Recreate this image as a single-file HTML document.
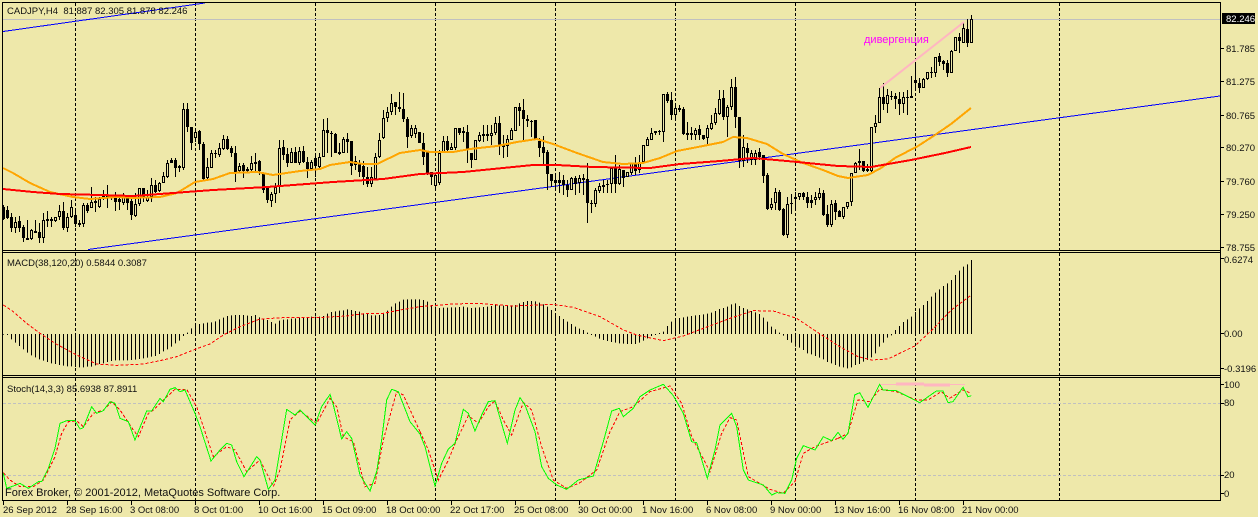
<!DOCTYPE html>
<html><head><meta charset="utf-8"><title>CADJPY,H4</title>
<style>
html,body{margin:0;padding:0;background:#EEE8AA;width:1258px;height:517px;overflow:hidden}
svg{display:block}
text{font-family:"Liberation Sans",sans-serif;font-size:9.5px;fill:#111}
.c{shape-rendering:crispEdges;fill:none}
</style></head><body>
<svg width="1258" height="517" viewBox="0 0 1258 517" xmlns="http://www.w3.org/2000/svg">
<rect width="1258" height="517" fill="#EEE8AA"/>
<g class="c" stroke="#000" stroke-dasharray="3 2">
<path d="M75.5 3V500M195.5 3V500M315.5 3V500M435.5 3V500M555.5 3V500M675.5 3V500M795.5 3V500M915.5 3V500M1059.5 3V500"/>
</g>
<path class="c" stroke="#c0c0c0" d="M3 19.5H1220"/>
<g class="c" stroke="#c0c0c0" stroke-dasharray="3 2"><path d="M3 403.5H1220M3 475.5H1220"/></g>
<g fill="none" stroke="#0000ff" shape-rendering="crispEdges">
<path d="M3 31.5L205 3"/>
<path d="M88 249.5L1220 96"/>
</g>
<!-- candle wicks -->
<path class="c" stroke="#000" d="M3.5 205V220M7.5 206V219M11.5 213V232M15.5 217V233M19.5 216V232M23.5 225V242M27.5 220V240M31.5 229V240M35.5 220V232M39.5 223V243M43.5 213V243M47.5 211V227M51.5 217V227M55.5 217V222M59.5 205V220M63.5 202V230M67.5 213V232M71.5 200V218M75.5 210V227M79.5 220V227M83.5 203V227M87.5 203V213M91.5 187V208M95.5 197V212M99.5 197V208M103.5 190V200M107.5 185V208M111.5 195V200M115.5 192V211M119.5 197V210M123.5 193V205M127.5 195V210M131.5 197V220M135.5 193V217M139.5 188V206M143.5 188V202M147.5 190V202M151.5 178V202M155.5 180V193M159.5 182V192M163.5 172V183M167.5 160V178M171.5 158V163M175.5 158V177M179.5 165V172M183.5 103V170M187.5 103V132M191.5 127V150M195.5 130V142M199.5 130V150M203.5 142V180M207.5 158V180M211.5 150V168M215.5 150V158M219.5 143V157M223.5 135V150M227.5 136V150M231.5 146V157M235.5 146V182M239.5 163V173M243.5 163V178M247.5 167V173M251.5 156V173M255.5 153V173M259.5 160V175M263.5 173V193M267.5 187V203M271.5 192V207M275.5 183V203M279.5 140V193M283.5 140V160M287.5 148V167M291.5 148V163M295.5 147V163M299.5 147V165M303.5 146V163M307.5 157V178M311.5 160V170M315.5 155V177M319.5 153V170M323.5 119V157M327.5 118V153M331.5 131V157M335.5 133V153M339.5 143V155M343.5 137V153M347.5 133V153M351.5 141V175M355.5 156V170M359.5 160V177M363.5 161V185M367.5 167V187M371.5 167V187M375.5 153V180M379.5 133V158M383.5 110V139M387.5 107V122M391.5 94V115M395.5 102V115M399.5 92V112M403.5 93V122M407.5 117V148M411.5 125V138M415.5 125V138M419.5 132V143M423.5 133V165M427.5 152V175M431.5 172V185M435.5 175V190M439.5 150V185M443.5 136V153M447.5 136V153M451.5 143V150M455.5 128V150M459.5 128V135M463.5 127V142M467.5 125V163M471.5 153V168M475.5 140V160M479.5 132V142M483.5 125V142M487.5 125V141M491.5 125V145M495.5 117V135M499.5 116V155M503.5 135V158M507.5 135V157M511.5 128V140M515.5 107V131M519.5 103V126M523.5 99V141M527.5 115V127M531.5 120V137M535.5 120V139M539.5 138V157M543.5 136V165M547.5 150V190M551.5 174V187M555.5 176V190M559.5 172V193M563.5 175V195M567.5 180V197M571.5 177V190M575.5 176V195M579.5 175V193M583.5 174V195M587.5 163V223M591.5 200V213M595.5 188V207M599.5 183V193M603.5 180V193M607.5 180V193M611.5 168V193M615.5 155V193M619.5 165V185M623.5 170V187M627.5 172V177M631.5 163V175M635.5 157V175M639.5 155V173M643.5 145V162M647.5 137V146M651.5 128V140M655.5 131V135M659.5 130V135M663.5 94V142M667.5 92V103M671.5 92V120M675.5 105V120M679.5 105V112M683.5 107V135M687.5 122V140M691.5 127V140M695.5 128V140M699.5 125V140M703.5 135V140M707.5 125V144M711.5 115V130M715.5 108V125M719.5 90V115M723.5 90V120M727.5 105V137M731.5 79V110M735.5 77V128M739.5 117V168M743.5 135V167M747.5 143V163M751.5 150V165M755.5 150V165M759.5 148V160M763.5 155V183M767.5 173V210M771.5 198V210M775.5 188V210M779.5 190V211M783.5 208V236M787.5 197V238M791.5 194V214M795.5 192V210M799.5 193V200M803.5 192V200M807.5 192V208M811.5 195V208M815.5 192V205M819.5 188V200M823.5 190V216M827.5 205V227M831.5 200V227M835.5 200V220M839.5 210V217M843.5 207V219M847.5 202V209M851.5 173V206M855.5 162V173M859.5 149V170M863.5 161V172M867.5 164V172M871.5 127V172M875.5 115V133M879.5 88V123M883.5 83V110M887.5 89V113M891.5 91V100M895.5 93V109M899.5 92V115M903.5 92V113M907.5 90V115M911.5 76V97M915.5 62V90M919.5 78V93M923.5 78V88M927.5 72V80M931.5 67V78M935.5 57V77M939.5 53V66M943.5 60V70M947.5 60V77M951.5 50V73M955.5 37V51M959.5 33V53M963.5 22V43M967.5 19V47M971.5 15V43"/>
<!-- candle bodies -->
<path class="c" stroke="#000" stroke-width="3" d="M3.5 207V219M7.5 210V218M11.5 217V228M15.5 222V228M19.5 221V228M23.5 227V238M27.5 238V240M31.5 230V239M35.5 231V233M39.5 232V238M43.5 220V238M47.5 219V221M51.5 219V221M55.5 217V221M59.5 211V217M63.5 211V228M67.5 217V228M71.5 207V217M75.5 215V224M79.5 223V225M83.5 205V224M87.5 205V211M91.5 202V208M95.5 201V203M99.5 199V207M103.5 195V197M107.5 195V197M111.5 197V198M115.5 197V202M119.5 199V202M123.5 197V203M127.5 197V203M131.5 201V215M135.5 204V216M139.5 188V204M143.5 188V197M147.5 197V201M151.5 185V197M155.5 185V192M159.5 183V191M163.5 176V183M167.5 163V177M171.5 160V163M175.5 160V168M179.5 166V168M183.5 109V168M187.5 109V127M191.5 127V143M195.5 132V138M199.5 131V144M203.5 144V179M207.5 167V178M211.5 153V168M215.5 153V154M219.5 148V155M223.5 139V149M227.5 139V149M231.5 148V153M235.5 153V172M239.5 166V171M243.5 165V171M247.5 169V171M251.5 163V170M255.5 162V164M259.5 161V171M263.5 174V190M267.5 188V200M271.5 194V201M275.5 187V194M279.5 148V186M283.5 147V155M287.5 154V163M291.5 152V163M295.5 152V163M299.5 151V163M303.5 151V162M307.5 162V169M311.5 162V169M315.5 158V166M319.5 157V167M323.5 130V157M327.5 130V133M331.5 133V134M335.5 134V153M339.5 152V154M343.5 139V153M347.5 139V142M351.5 141V166M355.5 161V165M359.5 163V172M363.5 166V177M367.5 177V184M371.5 177V184M375.5 157V179M379.5 140V157M383.5 118V138M387.5 112V118M391.5 103V112M395.5 102V107M399.5 107V109M403.5 109V119M407.5 119V137M411.5 128V136M415.5 128V134M419.5 132V143M423.5 143V157M427.5 152V173M431.5 172V177M435.5 175V186M439.5 153V183M443.5 141V152M447.5 141V150M451.5 147V150M455.5 128V148M459.5 128V133M463.5 131V133M467.5 132V150M471.5 153V160M475.5 140V160M479.5 135V141M483.5 134V136M487.5 134V136M491.5 133V136M495.5 123V133M499.5 123V146M503.5 145V147M507.5 139V146M511.5 130V140M515.5 107V131M519.5 107V111M523.5 110V119M527.5 119V121M531.5 121V122M535.5 120V139M539.5 141V148M543.5 147V153M547.5 152V174M551.5 174V181M555.5 180V183M559.5 180V183M563.5 180V185M567.5 185V190M571.5 178V190M575.5 178V184M579.5 178V183M583.5 178V180M587.5 179V203M591.5 203V204M595.5 190V204M599.5 186V191M603.5 185V187M607.5 184V185M611.5 168V184M615.5 168V184M619.5 169V184M623.5 170V178M627.5 172V177M631.5 163V173M635.5 164V171M639.5 162V170M643.5 145V162M647.5 139V146M651.5 133V140M655.5 131V133M659.5 131V132M663.5 94V132M667.5 94V101M671.5 100V115M675.5 108V115M679.5 108V110M683.5 109V134M687.5 133V135M691.5 133V135M695.5 130V135M699.5 129V135M703.5 135V139M707.5 128V138M711.5 123V129M715.5 113V123M719.5 99V114M723.5 98V117M727.5 107V117M731.5 87V107M735.5 87V117M739.5 117V161M743.5 147V161M747.5 148V153M751.5 153V160M755.5 153V160M759.5 152V157M763.5 155V176M767.5 175V209M771.5 204V208M775.5 192V203M779.5 192V210M783.5 209V235M787.5 204V235M791.5 203V204M795.5 197V199M799.5 193V197M803.5 193V197M807.5 197V203M811.5 200V203M815.5 197V200M819.5 193V198M823.5 193V215M827.5 214V225M831.5 204V225M835.5 203V212M839.5 211V217M843.5 207V217M847.5 202V207M851.5 173V202M855.5 163V173M859.5 161V163M863.5 161V171M867.5 169V171M871.5 127V171M875.5 123V127M879.5 97V123M883.5 97V104M887.5 95V104M891.5 96V97M895.5 96V99M899.5 99V104M903.5 97V104M907.5 97V98M911.5 96V98M915.5 80V83M919.5 83V88M923.5 79V88M927.5 72V79M931.5 72V73M935.5 57V73M939.5 56V62M943.5 61V64M947.5 63V73M951.5 51V73M955.5 37V51M959.5 37V41M963.5 28V43M967.5 29V43M971.5 19V43"/>
<!-- white interiors -->
<path class="c" stroke="#EEE8AA" d="M15.5 223V227M31.5 231V238M43.5 221V237M55.5 218V220M59.5 212V216M67.5 218V227M71.5 208V216M83.5 206V223M91.5 203V207M99.5 200V206M123.5 198V202M135.5 205V215M139.5 189V203M147.5 198V200M151.5 186V196M159.5 184V190M163.5 177V182M167.5 164V176M183.5 110V167M195.5 133V137M207.5 168V177M211.5 154V167M219.5 149V154M223.5 140V148M239.5 167V170M251.5 164V169M271.5 195V200M275.5 188V193M279.5 149V185M291.5 153V162M299.5 152V162M311.5 163V168M319.5 158V166M323.5 131V156M343.5 140V152M355.5 162V164M371.5 178V183M375.5 158V178M379.5 141V156M383.5 119V137M387.5 113V117M391.5 104V111M411.5 129V135M415.5 129V133M435.5 176V185M439.5 154V182M443.5 142V151M451.5 148V149M455.5 129V147M475.5 141V159M479.5 136V140M491.5 134V135M495.5 124V132M507.5 140V145M511.5 131V139M515.5 108V130M571.5 179V189M579.5 179V182M595.5 191V203M599.5 187V190M611.5 169V183M619.5 170V183M627.5 173V176M631.5 164V172M639.5 163V169M643.5 146V161M647.5 140V145M651.5 134V139M663.5 95V131M675.5 109V114M695.5 131V134M707.5 129V137M711.5 124V128M715.5 114V122M719.5 100V113M727.5 108V116M731.5 88V106M743.5 148V160M751.5 154V159M755.5 154V159M771.5 205V207M775.5 193V202M787.5 205V234M799.5 194V196M815.5 198V199M819.5 194V197M831.5 205V224M843.5 208V216M847.5 203V206M851.5 174V201M855.5 164V172M871.5 128V170M875.5 124V126M879.5 98V122M887.5 96V103M903.5 98V103M923.5 80V87M927.5 73V78M935.5 58V72M951.5 52V72M955.5 38V50M963.5 29V42M971.5 20V42"/>
<!-- moving averages -->
<g fill="none" stroke-width="2" shape-rendering="crispEdges">
<polyline stroke="#ffa500" points="3,168 13,173 30,183 50,192 73,197 90,199 117,197 133,198 160,197 177,193 195,182 213,179 230,173 257,172 273,175 300,171 320,169 330,165 350,162 363,164 377,164 400,153 420,150 430,152 453,152 470,149 497,146 517,142 537,139 553,144 577,153 603,162 623,164 643,163 660,158 677,151 703,146 723,142 733,137 747,138 767,144 783,154 803,163 823,170 838,176 848,178 868,175 881,168 895,158 918,146 935,135 951,124 971,108"/>
<polyline stroke="#ff0000" points="3,189 33,192 60,194 100,195 133,196 173,193 213,190 267,187 333,182 383,179 420,174 463,172 503,168 533,165 557,165 593,167 650,168 680,164 720,161 753,158 787,161 838,166 871,167 911,160 945,153 971,147"/>
</g>
<path fill="none" stroke="#ffb6c1" stroke-width="2" d="M880 88L964 22"/>
<text x="864" y="43" style="fill:#ff00ff;font-size:11px">дивергенция</text>
<!-- MACD histogram -->
<path class="c" stroke="#000" transform="translate(0,250) scale(1,.33333)" d="M3.5 252V254M7.5 252V255M11.5 252V268M15.5 252V278M19.5 252V288M23.5 252V298M27.5 252V308M31.5 252V316M35.5 252V322M39.5 252V328M43.5 252V332M47.5 252V336M51.5 252V340M55.5 252V342M59.5 252V345M63.5 252V347M67.5 252V349M71.5 252V349M75.5 252V351M79.5 252V352M83.5 252V352M87.5 252V350M91.5 252V350M95.5 252V346M99.5 252V342M103.5 252V340M107.5 252V336M111.5 252V333M115.5 252V331M119.5 252V331M123.5 252V331M127.5 252V331M131.5 252V330M135.5 252V329M139.5 252V327M143.5 252V325M147.5 252V323M151.5 252V320M155.5 252V318M159.5 252V312M163.5 252V304M167.5 252V298M171.5 252V290M175.5 252V280M179.5 252V272M183.5 252V258M187.5 252V248M191.5 252V235M195.5 252V224M199.5 252V222M203.5 252V220M207.5 252V218M211.5 252V217M215.5 252V214M219.5 252V208M223.5 252V203M227.5 252V198M231.5 252V196M235.5 252V195M239.5 252V195M243.5 252V195M247.5 252V197M251.5 252V198M255.5 252V195M259.5 252V202M263.5 252V207M267.5 252V210M271.5 252V216M275.5 252V221M279.5 252V212M283.5 252V209M287.5 252V208M291.5 252V206M295.5 252V205M299.5 252V203M303.5 252V202M307.5 252V201M311.5 252V200M315.5 252V200M319.5 252V200M323.5 252V198M327.5 252V191M331.5 252V186M335.5 252V184M339.5 252V182M343.5 252V181M347.5 252V178M351.5 252V180M355.5 252V183M359.5 252V185M363.5 252V190M367.5 252V192M371.5 252V196M375.5 252V196M379.5 252V195M383.5 252V190M387.5 252V182M391.5 252V170M395.5 252V160M399.5 252V155M403.5 252V149M407.5 252V148M411.5 252V148M415.5 252V148M419.5 252V148M423.5 252V150M427.5 252V155M431.5 252V165M435.5 252V170M439.5 252V174M443.5 252V173M447.5 252V173M451.5 252V172M455.5 252V172M459.5 252V171M463.5 252V170M467.5 252V172M471.5 252V174M475.5 252V173M479.5 252V172M483.5 252V171M487.5 252V170M491.5 252V168M495.5 252V165M499.5 252V166M503.5 252V167M507.5 252V167M511.5 252V166M515.5 252V165M519.5 252V160M523.5 252V156M527.5 252V153M531.5 252V153M535.5 252V154M539.5 252V158M543.5 252V163M547.5 252V170M551.5 252V180M555.5 252V190M559.5 252V198M563.5 252V207M567.5 252V215M571.5 252V222M575.5 252V230M579.5 252V236M583.5 252V240M587.5 252V248M591.5 252V255M595.5 252V260M599.5 252V266M603.5 252V270M607.5 252V273M611.5 252V276M615.5 252V278M619.5 252V280M623.5 252V281M627.5 252V282M631.5 252V282M635.5 252V282M639.5 252V278M643.5 252V272M647.5 252V265M651.5 252V258M655.5 252V255M659.5 252V249M663.5 252V245M667.5 252V228M671.5 252V215M675.5 252V208M679.5 252V204M683.5 252V202M687.5 252V200M691.5 252V198M695.5 252V196M699.5 252V195M703.5 252V193M707.5 252V191M711.5 252V188M715.5 252V183M719.5 252V177M723.5 252V174M727.5 252V170M731.5 252V163M735.5 252V160M739.5 252V168M743.5 252V174M747.5 252V178M751.5 252V183M755.5 252V187M759.5 252V192M763.5 252V203M767.5 252V215M771.5 252V230M775.5 252V238M779.5 252V248M783.5 252V257M787.5 252V270M791.5 252V278M795.5 252V290M799.5 252V293M803.5 252V300M807.5 252V310M811.5 252V313M815.5 252V318M819.5 252V323M823.5 252V328M827.5 252V336M831.5 252V340M835.5 252V345M839.5 252V350M843.5 252V352M847.5 252V355M851.5 252V352M855.5 252V345M859.5 252V342M863.5 252V335M867.5 252V330M871.5 252V322M875.5 252V310M879.5 252V290M883.5 252V278M887.5 252V263M891.5 252V256M895.5 252V240M899.5 252V228M903.5 252V216M907.5 252V208M911.5 252V200M915.5 252V186M919.5 252V175M923.5 252V165M927.5 252V153M931.5 252V140M935.5 252V128M939.5 252V118M943.5 252V108M947.5 252V100M951.5 252V90M955.5 252V75M959.5 252V62M963.5 252V50M967.5 252V43M971.5 252V30"/>
<!-- MACD signal -->
<g fill="none" stroke="#ff0000" stroke-width="3" stroke-dasharray="9 6" shape-rendering="crispEdges">
<polyline transform="translate(0,250) scale(.33333)" points="10,165 40,185 80,220 120,250 170,283 230,315 290,342 350,346 430,342 480,332 530,320 585,298 630,282 670,255 720,230 780,207 850,203 950,203 1040,198 1100,190 1150,190 1200,180 1260,170"/>
<polyline transform="translate(420,250) scale(.33333)" points="0,170 100,162 170,160 280,168 400,163 460,172 540,200 610,240 650,255 730,272 790,258 850,235 930,205 1000,182 1060,183 1130,205 1190,245 1254,287"/>
<polyline transform="translate(838,250) scale(.33333)" points="0,287 60,320 100,330 150,327 230,288 280,242 340,180 400,135"/>
</g>
<!-- stochastic signal -->
<g fill="none" stroke="#ff0000" stroke-width="3" stroke-dasharray="9 6" shape-rendering="crispEdges">
<polyline transform="translate(0,250) scale(.33333)" points="10,668 30,690 60,710 100,710 130,690 165,620 185,550 205,515 230,513 250,530 280,490 310,480 335,455 360,480 400,540 415,560 445,490 460,480 490,450 525,418 560,418 590,470 640,620 680,590 705,600 740,665 780,630 820,710 840,660 870,510 900,483 950,520 990,445 1010,470 1030,560 1060,575 1095,710 1125,700 1150,570 1190,425 1210,435 1260,545"/>
<polyline transform="translate(420,250) scale(.33333)" points="0,545 25,600 55,690 85,630 110,570 145,497 175,520 205,470 225,453 250,510 275,555 310,457 335,480 365,590 400,690 440,715 480,698 530,660 570,545 600,485 640,470 690,425 750,408 785,460 815,560 870,665 905,550 930,503 950,510 985,680 1050,718 1090,730 1125,695 1150,610 1185,590 1254,565"/>
<polyline transform="translate(838,250) scale(.33333)" points="0,565 30,550 60,450 95,455 125,418 175,425 235,450 270,450 310,425 335,445 375,420 400,430"/>
</g>
<!-- pink on stochastic -->
<g fill="none" stroke="#ffb6c1" shape-rendering="crispEdges">
<path d="M880 384.5H965"/>
<path stroke-width="3" d="M896 384H924M924 385H950"/>
</g>
<!-- stochastic main -->
<g fill="none" stroke="#00ff00" stroke-width="3" shape-rendering="crispEdges">
<polyline transform="translate(0,250) scale(.33333)" points="10,670 20,715 40,708 60,700 85,715 115,695 125,695 145,655 165,595 180,520 200,512 225,512 240,537 250,533 275,470 290,490 310,482 330,455 345,460 360,505 385,515 405,570 425,520 440,483 455,483 480,445 490,455 510,418 525,413 540,425 555,420 585,490 600,530 633,633 660,600 680,580 695,585 710,635 732,680 770,620 780,630 805,718 825,690 840,600 860,478 885,495 900,480 945,525 965,470 990,433 1000,465 1025,567 1040,545 1055,565 1080,675 1110,723 1130,665 1145,570 1160,450 1175,418 1195,425 1230,515 1260,552"/>
<polyline transform="translate(420,250) scale(.33333)" points="0,552 15,590 45,708 65,640 85,597 105,580 130,478 145,490 165,543 185,495 205,455 225,452 262,580 285,480 300,443 315,465 345,545 365,650 385,685 410,705 440,718 475,690 520,678 550,575 575,483 598,475 610,500 640,475 660,440 690,420 730,403 760,437 790,490 815,575 830,578 862,685 885,600 900,525 935,490 950,530 970,660 985,690 1030,705 1055,735 1070,728 1095,730 1115,690 1130,625 1150,587 1185,600 1210,560 1235,572 1254,547"/>
<polyline transform="translate(838,250) scale(.33333)" points="0,547 15,568 30,550 50,435 65,428 90,472 125,403 135,420 175,422 245,458 295,423 315,423 330,458 345,455 375,412 390,440 400,437"/>
</g>
<!-- frames -->
<g class="c" stroke="#000">
<path d="M2.5 2.5H1220.5V500.5H2.5ZM2 250.5H1221M2 252.5H1221M2 375.5H1221M2 377.5H1221"/>
<path d="M1221 48.5h3M1221 81.5h3M1221 115.5h3M1221 147.5h3M1221 181.5h3M1221 214.5h3M1221 247.5h3M1221 258.5h3M1221 333.5h3M1221 368.5h3M1221 384.5h3M1221 403.5h3M1221 475.5h3M1221 493.5h3"/>
<path d="M3.5 501V505M67.5 501V505M131.5 501V505M195.5 501V505M259.5 501V505M323.5 501V505M387.5 501V505M451.5 501V505M515.5 501V505M579.5 501V505M643.5 501V505M707.5 501V505M771.5 501V505M835.5 501V505M899.5 501V505M963.5 501V505"/>
</g>
<!-- labels -->
<text x="7" y="14">CADJPY,H4&#160;&#160;81.887 82.305 81.878 82.246</text>
<text x="7" y="266">MACD(38,120,20) 0.5844 0.3087</text>
<text x="7" y="392">Stoch(14,3,3) 85.6938 87.8911</text>
<text x="5" y="496" style="font-size:11px">Forex Broker, © 2001-2012, MetaQuotes Software Corp.</text>
<rect x="1222" y="13" width="33" height="11" fill="#000"/>
<text x="1226" y="22" style="fill:#fff">82.246</text>
<text x="1226" y="52">81.785</text>
<text x="1226" y="85">81.275</text>
<text x="1226" y="119">80.765</text>
<text x="1226" y="151">80.270</text>
<text x="1226" y="185">79.760</text>
<text x="1226" y="218">79.250</text>
<text x="1226" y="251">78.755</text>
<text x="1224" y="263">0.6274</text>
<text x="1224" y="337">0.00</text>
<text x="1224" y="372">-0.3196</text>
<text x="1224" y="388">100</text>
<text x="1224" y="406">80</text>
<text x="1224" y="478">20</text>
<text x="1224" y="497">0</text>
<text x="3" y="513">26 Sep 2012</text>
<text x="66" y="513">28 Sep 16:00</text>
<text x="130" y="513">3 Oct 08:00</text>
<text x="194" y="513">8 Oct 01:00</text>
<text x="258" y="513">10 Oct 16:00</text>
<text x="322" y="513">15 Oct 09:00</text>
<text x="386" y="513">18 Oct 00:00</text>
<text x="450" y="513">22 Oct 17:00</text>
<text x="514" y="513">25 Oct 08:00</text>
<text x="578" y="513">30 Oct 00:00</text>
<text x="642" y="513">1 Nov 16:00</text>
<text x="706" y="513">6 Nov 08:00</text>
<text x="770" y="513">9 Nov 00:00</text>
<text x="834" y="513">13 Nov 16:00</text>
<text x="898" y="513">16 Nov 08:00</text>
<text x="962" y="513">21 Nov 00:00</text>
</svg>
</body></html>
